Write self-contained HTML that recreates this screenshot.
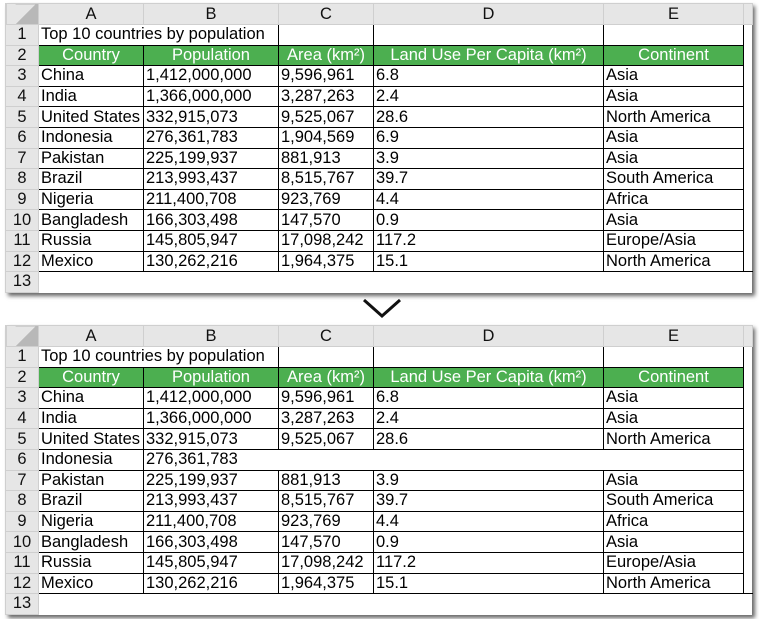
<!DOCTYPE html>
<html><head><meta charset="utf-8"><style>
*{box-sizing:border-box;margin:0;padding:0}
body{width:759px;height:619px;background:#fff;position:relative;overflow:hidden;font-family:"Liberation Sans",Arial,sans-serif}
.p{position:absolute;left:5px;width:747px;background:#fff;box-shadow:3px 3px 4px rgba(0,0,0,.6)}
table{border-collapse:collapse;table-layout:fixed;width:747px;font-size:16.5px;color:#000}
td{height:20.6px;line-height:19px;padding:0 2px;white-space:nowrap;overflow:hidden;border:1px solid #000}
tr.h td{background:#e6e6e6;border:1px solid #cfcfcf;text-align:center;height:21px;color:#111}
td.n{background:#e6e6e6;border:1px solid #cfcfcf;text-align:center;padding:0;color:#111}
tr.g td.c{background:#4caf50;color:#fff;text-align:center}
td.x{border:none;border-left:1px solid #000}
tr.e td{border:none;border-top:1px solid #000}
tr.e td.n{border:1px solid #cfcfcf}
</style></head><body>

<div class="p" style="top:3px">
<table>
<colgroup><col style="width:33px"><col style="width:105px"><col style="width:135px"><col style="width:95px"><col style="width:230px"><col style="width:140px"><col style="width:9px"></colgroup>
<tr class="h"><td style="background:linear-gradient(135deg,#e6e6e6 55%,#b8b8b8 56%)"></td><td>A</td><td>B</td><td>C</td><td>D</td><td>E</td><td></td></tr>
<tr><td class="n">1</td><td colspan="2">Top 10 countries by population</td><td></td><td></td><td></td><td class="x"></td></tr>
<tr class="g"><td class="n">2</td><td class="c">Country</td><td class="c">Population</td><td class="c">Area (km²)</td><td class="c">Land Use Per Capita (km²)</td><td class="c">Continent</td><td class="x"></td></tr>
<tr><td class="n">3</td><td>China</td><td>1,412,000,000</td><td>9,596,961</td><td>6.8</td><td>Asia</td><td class="x"></td></tr>
<tr><td class="n">4</td><td>India</td><td>1,366,000,000</td><td>3,287,263</td><td>2.4</td><td>Asia</td><td class="x"></td></tr>
<tr><td class="n">5</td><td>United States</td><td>332,915,073</td><td>9,525,067</td><td>28.6</td><td>North America</td><td class="x"></td></tr>
<tr><td class="n">6</td><td>Indonesia</td><td>276,361,783</td><td>1,904,569</td><td>6.9</td><td>Asia</td><td class="x"></td></tr>
<tr><td class="n">7</td><td>Pakistan</td><td>225,199,937</td><td>881,913</td><td>3.9</td><td>Asia</td><td class="x"></td></tr>
<tr><td class="n">8</td><td>Brazil</td><td>213,993,437</td><td>8,515,767</td><td>39.7</td><td>South America</td><td class="x"></td></tr>
<tr><td class="n">9</td><td>Nigeria</td><td>211,400,708</td><td>923,769</td><td>4.4</td><td>Africa</td><td class="x"></td></tr>
<tr><td class="n">10</td><td>Bangladesh</td><td>166,303,498</td><td>147,570</td><td>0.9</td><td>Asia</td><td class="x"></td></tr>
<tr><td class="n">11</td><td>Russia</td><td>145,805,947</td><td>17,098,242</td><td>117.2</td><td>Europe/Asia</td><td class="x"></td></tr>
<tr><td class="n">12</td><td>Mexico</td><td>130,262,216</td><td>1,964,375</td><td>15.1</td><td>North America</td><td class="x"></td></tr>
<tr class="e"><td class="n">13</td><td></td><td></td><td></td><td></td><td></td><td></td></tr>
</table>
</div>

<svg style="position:absolute;left:360px;top:296px" width="46" height="26"><polyline points="4,4 22,20 40,4" fill="none" stroke="#111" stroke-width="3"/></svg>

<div class="p" style="top:325px">
<table>
<colgroup><col style="width:33px"><col style="width:105px"><col style="width:135px"><col style="width:95px"><col style="width:230px"><col style="width:140px"><col style="width:9px"></colgroup>
<tr class="h"><td style="background:linear-gradient(135deg,#e6e6e6 55%,#b8b8b8 56%)"></td><td>A</td><td>B</td><td>C</td><td>D</td><td>E</td><td></td></tr>
<tr><td class="n">1</td><td colspan="2">Top 10 countries by population</td><td></td><td></td><td></td><td class="x"></td></tr>
<tr class="g"><td class="n">2</td><td class="c">Country</td><td class="c">Population</td><td class="c">Area (km²)</td><td class="c">Land Use Per Capita (km²)</td><td class="c">Continent</td><td class="x"></td></tr>
<tr><td class="n">3</td><td>China</td><td>1,412,000,000</td><td>9,596,961</td><td>6.8</td><td>Asia</td><td class="x"></td></tr>
<tr><td class="n">4</td><td>India</td><td>1,366,000,000</td><td>3,287,263</td><td>2.4</td><td>Asia</td><td class="x"></td></tr>
<tr><td class="n">5</td><td>United States</td><td>332,915,073</td><td>9,525,067</td><td>28.6</td><td>North America</td><td class="x"></td></tr>
<tr><td class="n">6</td><td>Indonesia</td><td style="border-right:none">276,361,783</td><td colspan="3" style="border-left:none"></td><td class="x"></td></tr>
<tr><td class="n">7</td><td>Pakistan</td><td>225,199,937</td><td>881,913</td><td>3.9</td><td>Asia</td><td class="x"></td></tr>
<tr><td class="n">8</td><td>Brazil</td><td>213,993,437</td><td>8,515,767</td><td>39.7</td><td>South America</td><td class="x"></td></tr>
<tr><td class="n">9</td><td>Nigeria</td><td>211,400,708</td><td>923,769</td><td>4.4</td><td>Africa</td><td class="x"></td></tr>
<tr><td class="n">10</td><td>Bangladesh</td><td>166,303,498</td><td>147,570</td><td>0.9</td><td>Asia</td><td class="x"></td></tr>
<tr><td class="n">11</td><td>Russia</td><td>145,805,947</td><td>17,098,242</td><td>117.2</td><td>Europe/Asia</td><td class="x"></td></tr>
<tr><td class="n">12</td><td>Mexico</td><td>130,262,216</td><td>1,964,375</td><td>15.1</td><td>North America</td><td class="x"></td></tr>
<tr class="e"><td class="n">13</td><td></td><td></td><td></td><td></td><td></td><td></td></tr>
</table>
</div>
</body></html>
